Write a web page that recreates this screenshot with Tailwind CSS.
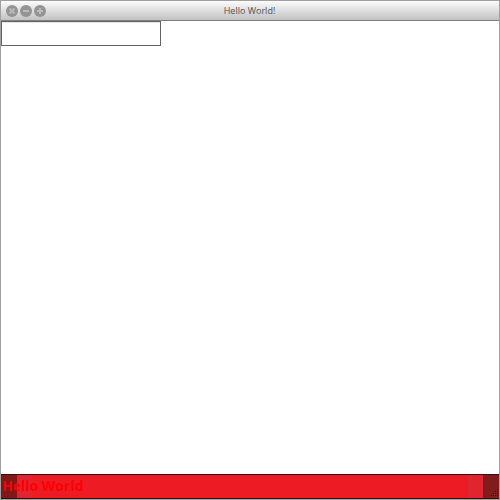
<!DOCTYPE html>
<html lang="en">
<head>
<meta charset="utf-8">
<title>Hello World!</title>
<script src="https://cdn.jsdelivr.net/npm/@tailwindcss/browser@4"></script>
</head>
<body class="h-[500px] w-[500px] overflow-hidden font-['Open_Sans',sans-serif]">
<div class="flex h-[500px] w-[500px] flex-col border border-[#a0a0a0] bg-white">
  <header class="grid h-5 shrink-0 grid-cols-[1fr_auto_1fr] items-center border-b border-[#808080] bg-linear-to-b from-[#fcfcfc] to-[#c2c2c2]">
    <div class="flex gap-[2px] pt-px pl-[5px]">
      <svg class="size-3" viewBox="0 0 12 12"><circle cx="6" cy="6" r="6" fill="#949494"/><path d="M3.5 3.5l5 5M8.5 3.5l-5 5" stroke="#b8b8b8" stroke-width="2"/></svg>
      <svg class="size-3" viewBox="0 0 12 12"><circle cx="6" cy="6" r="6" fill="#949494"/><path d="M3 6h6" stroke="#bcbcbc" stroke-width="2"/></svg>
      <svg class="size-3" viewBox="0 0 12 12"><circle cx="6" cy="6" r="6" fill="#949494"/><path d="M3 6h6M6 3v6" stroke="#bcbcbc" stroke-width="2"/></svg>
    </div>
    <h1 class="pr-px text-[9px] leading-[18px] text-[#505050]">Hello World!</h1>
    <div></div>
  </header>
  <main class="flex-1">
    <div class="h-[25px] w-40 border border-[#646464] bg-white"><div class="h-px bg-[#e4e4e0]"></div></div>
  </main>
  <footer class="flex h-[25px] shrink-0 items-stretch border-y border-[#301010] bg-[linear-gradient(90deg,#801818_0_16px,#e02430_16px_31px,#ed1c24_31px_467px,#e02430_467px_482px,#801c1c_482px)]">
    <p class="flex-1 pl-px text-[14px] leading-[22px] font-bold text-[#ff0000]">Hello World</p>
    <svg class="mt-[14px] mr-px h-2 w-2" viewBox="0 0 8 8" fill="#3c0c0c"><path d="M7 0h1v1H7zM5 2h1v1H5zM7 2h1v1H7zM3 4h1v1H3zM5 4h1v1H5zM7 4h1v1H7zM1 6h1v1H1zM3 6h1v1H3zM5 6h1v1H5zM7 6h1v1H7z"/></svg>
  </footer>
</div>
</body>
</html>
